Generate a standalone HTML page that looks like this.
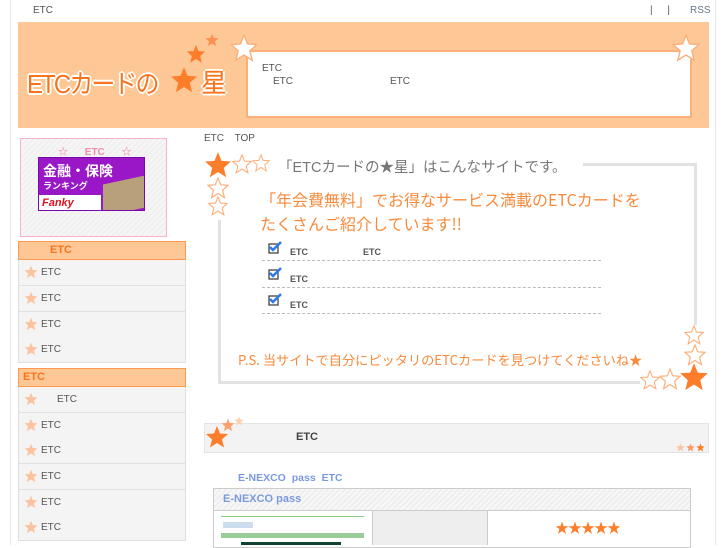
<!DOCTYPE html>
<html><head><meta charset="utf-8"><style>
*{margin:0;padding:0;box-sizing:border-box}
body{width:727px;height:545px;overflow:hidden;background:#fff;font-family:"Liberation Sans","Noto Sans CJK JP",sans-serif;position:relative;color:#555}
.a{position:absolute}
.t{font-size:10px;color:#555}
.mh{position:absolute;left:18px;width:168px;height:19px;background:#fec896;border:1px solid #fd9a50;color:#f7731d;font-size:11px;font-weight:bold;line-height:17px}
.mi{position:absolute;left:18px;width:168px;height:26px;background:#f4f4f4;border:1px solid #e0e0e0;border-top:none;font-size:10px;color:#555;line-height:25px}
.mi svg{position:absolute;left:5px;top:5px}
.mi span{position:absolute;left:22px}
.dl{position:absolute;left:262px;width:339px;border-top:1px dashed #bbb}
.ck{position:absolute;left:268px;width:14px;height:13px}
.ek{position:absolute;left:290px;font-size:9px;font-weight:bold;color:#555}
.hw{color:#f98a3c;font-size:16px;font-family:"Noto Sans CJK JP",sans-serif}
</style></head><body>
<svg width="0" height="0" style="position:absolute"><defs><polygon id="s" points="12,1 15,8.5 23,9 17,14.5 19,22.5 12,18 5,22.5 7,14.5 1,9 9,8.5"/></defs></svg>
<div class="a" style="left:10px;top:0;width:1px;height:545px;background:#e6e6e6"></div>
<div class="a" style="left:715px;top:0;width:1px;height:545px;background:#e6e6e6"></div>
<div class="a t" style="left:33px;top:5px">ETC</div>
<div class="a t" style="left:650px;top:5px;word-spacing:12px">| |</div>
<div class="a t" style="left:690px;top:5px;color:#678">RSS</div>

<div class="a" style="left:18px;top:22px;width:691px;height:106px;background:#fec896"></div>
<div class="a" style="left:27px;top:64px;font-size:26px;color:#f7731d;text-shadow:2px 0 #fff,-2px 0 #fff,0 2px #fff,0 -2px #fff,1px 1px #fff,-1px -1px #fff,1px -1px #fff,-1px 1px #fff;letter-spacing:-2px;transform:scaleX(0.92);transform-origin:left">ETCカードの</div>
<svg class="a" style="left:170px;top:66px" width="28" height="28" viewBox="0 0 24 24"><use href="#s" fill="#fd7d2a"/></svg>
<div class="a" style="left:201px;top:63px;font-size:26px;color:#f7731d;text-shadow:2px 0 #fff,-2px 0 #fff,0 2px #fff,0 -2px #fff">星</div>
<svg class="a" style="left:186px;top:44px" width="20" height="20" viewBox="0 0 24 24"><use href="#s" fill="#fd7d2a"/></svg>
<svg class="a" style="left:205px;top:33px" width="14" height="14" viewBox="0 0 24 24"><use href="#s" fill="#fc9050"/></svg>
<div class="a" style="left:246px;top:50px;width:446px;height:68px;background:#fff;border:2px solid #fdaf7a"></div>
<svg class="a" style="left:230px;top:34px" width="28" height="28" viewBox="0 0 24 24"><use href="#s" fill="#fff" stroke="#fdaf7a" stroke-width="1.2"/></svg>
<svg class="a" style="left:672px;top:34px" width="28" height="28" viewBox="0 0 24 24"><use href="#s" fill="#fff" stroke="#fdaf7a" stroke-width="1.2"/></svg>
<div class="a t" style="left:262px;top:63px">ETC</div>
<div class="a t" style="left:273px;top:76px">ETC</div>
<div class="a t" style="left:390px;top:76px">ETC</div>

<div class="a" style="left:20px;top:138px;width:147px;height:99px;border:1px solid #f9b3c8;background:repeating-linear-gradient(135deg,#f0f0f0 0 2px,#f6f6f6 2px 4px)"></div>
<div class="a" style="left:58px;top:143px;font-size:10px;color:#f58cb0;font-weight:bold;word-spacing:14px">☆ ETC ☆</div>
<div class="a" style="left:38px;top:157px;width:107px;height:54px;background:#9a17c8;border:1px solid #7a0aa8;overflow:hidden">
<div class="a" style="left:4px;top:3px;color:#fff;font-weight:bold;font-size:14px">金融・保険</div>
<div class="a" style="left:4px;top:21px;color:#fff;font-weight:bold;font-size:9px">ランキング</div>
<div class="a" style="left:0;top:37px;width:62px;height:17px;background:#fff;color:#e01020;font-weight:bold;font-style:italic;font-size:11px;padding-left:3px;line-height:17px">Fanky</div>
<div class="a" style="left:64px;top:22px;width:42px;height:32px;background:#b8a07a;transform:skewY(-12deg)"></div>
</div>
<div class="mh" style="top:241px;padding-left:31px">ETC</div>
<div class="mi" style="top:260px"><svg width="14" height="14" viewBox="0 0 24 24"><use href="#s" fill="#fcc3a0"/></svg><span>ETC</span></div>
<div class="mi" style="top:286px"><svg width="14" height="14" viewBox="0 0 24 24"><use href="#s" fill="#fcc3a0"/></svg><span>ETC</span></div>
<div class="mi" style="top:312px"><svg width="14" height="14" viewBox="0 0 24 24"><use href="#s" fill="#fcc3a0"/></svg><span>ETC</span></div>
<div class="mi" style="top:337px"><svg width="14" height="14" viewBox="0 0 24 24"><use href="#s" fill="#fcc3a0"/></svg><span>ETC</span></div>
<div class="mh" style="top:368px;padding-left:4px">ETC</div>
<div class="mi" style="top:387px"><svg width="14" height="14" viewBox="0 0 24 24"><use href="#s" fill="#fcc3a0"/></svg><span style="left:38px">ETC</span></div>
<div class="mi" style="top:413px"><svg width="14" height="14" viewBox="0 0 24 24"><use href="#s" fill="#fcc3a0"/></svg><span>ETC</span></div>
<div class="mi" style="top:438px"><svg width="14" height="14" viewBox="0 0 24 24"><use href="#s" fill="#fcc3a0"/></svg><span>ETC</span></div>
<div class="mi" style="top:464px"><svg width="14" height="14" viewBox="0 0 24 24"><use href="#s" fill="#fcc3a0"/></svg><span>ETC</span></div>
<div class="mi" style="top:490px"><svg width="14" height="14" viewBox="0 0 24 24"><use href="#s" fill="#fcc3a0"/></svg><span>ETC</span></div>
<div class="mi" style="top:515px"><svg width="14" height="14" viewBox="0 0 24 24"><use href="#s" fill="#fcc3a0"/></svg><span>ETC</span></div>

<div class="a t" style="left:204px;top:133px;word-spacing:8px">ETC TOP</div>
<div class="a" style="left:218px;top:163px;width:479px;height:221px;border:3px solid #e2e2e2"></div>
<div class="a" style="left:270px;top:155px;width:313px;height:20px;background:#fff"></div>
<div class="a" style="left:278px;top:156px;font-size:14.5px;color:#777">「ETCカードの★星」はこんなサイトです。</div>
<div class="a" style="left:203px;top:150px;width:68px;height:70px;background:#fff"></div>
<svg class="a" style="left:204px;top:151px" width="28" height="28" viewBox="0 0 24 24"><use href="#s" fill="#fd7d2a"/></svg>
<svg class="a" style="left:232px;top:154px" width="20" height="20" viewBox="0 0 24 24"><use href="#s" fill="#fff" stroke="#fdaf7a" stroke-width="1.3"/></svg>
<svg class="a" style="left:252px;top:154px" width="18" height="18" viewBox="0 0 24 24"><use href="#s" fill="#fff" stroke="#fdaf7a" stroke-width="1.3"/></svg>
<svg class="a" style="left:207px;top:177px" width="22" height="22" viewBox="0 0 24 24"><use href="#s" fill="#fff" stroke="#fdaf7a" stroke-width="1.3"/></svg>
<svg class="a" style="left:208px;top:196px" width="20" height="20" viewBox="0 0 24 24"><use href="#s" fill="#fff" stroke="#fdaf7a" stroke-width="1.3"/></svg>
<div class="a hw" style="left:260px;top:187px;line-height:24px">「年会費無料」でお得なサービス満載のETCカードを<br>たくさんご紹介しています!!</div>

<svg class="ck" style="top:241px" viewBox="0 0 14 13"><rect x="1" y="3" width="9" height="9" fill="none" stroke="#444" stroke-width="1.3"/><path d="M2 6 L5 9 L13 1" fill="none" stroke="#2b7de8" stroke-width="2.5"/></svg>
<div class="ek" style="top:247px">ETC</div><div class="ek" style="left:363px;top:247px">ETC</div>
<div class="dl" style="top:260px"></div>
<svg class="ck" style="top:267px" viewBox="0 0 14 13"><rect x="1" y="3" width="9" height="9" fill="none" stroke="#444" stroke-width="1.3"/><path d="M2 6 L5 9 L13 1" fill="none" stroke="#2b7de8" stroke-width="2.5"/></svg>
<div class="ek" style="top:274px">ETC</div>
<div class="dl" style="top:287px"></div>
<svg class="ck" style="top:293px" viewBox="0 0 14 13"><rect x="1" y="3" width="9" height="9" fill="none" stroke="#444" stroke-width="1.3"/><path d="M2 6 L5 9 L13 1" fill="none" stroke="#2b7de8" stroke-width="2.5"/></svg>
<div class="ek" style="top:300px">ETC</div>
<div class="dl" style="top:313px"></div>
<div class="a" style="left:680px;top:325px;width:30px;height:40px;background:#fff"></div>
<div class="a" style="left:640px;top:366px;width:70px;height:26px;background:#fff"></div>
<div class="a hw" style="left:238px;top:350px;font-size:13.2px;white-space:nowrap">P.S. 当サイトで自分にピッタリのETCカードを見つけてくださいね★</div>
<svg class="a" style="left:684px;top:325px" width="20" height="20" viewBox="0 0 24 24"><use href="#s" fill="#fff" stroke="#fdaf7a" stroke-width="1.3"/></svg>
<svg class="a" style="left:684px;top:344px" width="22" height="22" viewBox="0 0 24 24"><use href="#s" fill="#fff" stroke="#fdaf7a" stroke-width="1.3"/></svg>
<svg class="a" style="left:640px;top:370px" width="20" height="20" viewBox="0 0 24 24"><use href="#s" fill="#fff" stroke="#fdaf7a" stroke-width="1.3"/></svg>
<svg class="a" style="left:659px;top:368px" width="22" height="22" viewBox="0 0 24 24"><use href="#s" fill="#fff" stroke="#fdaf7a" stroke-width="1.3"/></svg>
<svg class="a" style="left:679px;top:362px" width="30" height="30" viewBox="0 0 24 24"><use href="#s" fill="#fd7d2a"/></svg>

<div class="a" style="left:204px;top:423px;width:505px;height:30px;background:#f3f3f3;border:1px solid #e4e4e4"></div>
<svg class="a" style="left:205px;top:425px" width="24" height="24" viewBox="0 0 24 24"><use href="#s" fill="#fd7d2a"/></svg>
<svg class="a" style="left:221px;top:418px" width="14" height="14" viewBox="0 0 24 24"><use href="#s" fill="#fca070"/></svg>
<svg class="a" style="left:234px;top:416px" width="10" height="10" viewBox="0 0 24 24"><use href="#s" fill="#fdd0b0"/></svg>
<div class="a" style="left:296px;top:431px;font-size:11px;font-weight:bold;color:#444">ETC</div>
<svg class="a" style="left:676px;top:443px" width="30" height="9" viewBox="0 0 30 9"><svg width="9" height="9" viewBox="0 0 24 24"><use href="#s" fill="#fcc3a0"/></svg><svg x="10" width="9" height="9" viewBox="0 0 24 24"><use href="#s" fill="#fd9a60"/></svg><svg x="20" width="9" height="9" viewBox="0 0 24 24"><use href="#s" fill="#fd7d2a"/></svg></svg>

<div class="a" style="left:238px;top:472px;font-size:10.5px;font-weight:bold;color:#7a9ae0;word-spacing:3px">E-NEXCO pass ETC</div>
<div class="a" style="left:213px;top:488px;width:478px;height:60px;border:1px solid #ccc"></div>
<div class="a" style="left:214px;top:489px;width:476px;height:22px;background:repeating-linear-gradient(135deg,#eee 0 2px,#f8f8f8 2px 4px);border-bottom:1px solid #ccc;color:#7a9ae0;font-weight:bold;font-size:11px;line-height:21px;padding-left:9px">E-NEXCO pass</div>
<div class="a" style="left:221px;top:516px;width:143px;height:29px;background:#fff"><div class="a" style="left:0;top:0;width:143px;height:1px;background:#8c8"></div><div class="a" style="left:2px;top:6px;width:30px;height:6px;background:#cde"></div><div class="a" style="left:0;top:17px;width:143px;height:5px;background:#9c9"></div><div class="a" style="left:20px;top:26px;width:100px;height:3px;background:#143"></div></div>
<div class="a" style="left:372px;top:511px;width:116px;height:34px;background:#eee;border-left:1px solid #ccc;border-right:1px solid #ccc"></div>
<div class="a" style="left:555px;top:518px;font-size:14px;color:#fd7d2a;letter-spacing:-1px">★★★★★</div>
</body></html>
